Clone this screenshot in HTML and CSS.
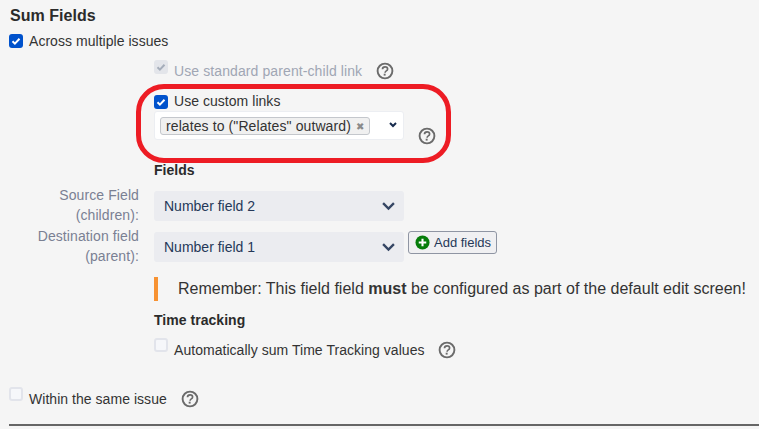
FILE: index.html
```html
<!DOCTYPE html>
<html lang="en">
<head>
    <meta charset="UTF-8">
    <title>Sum Fields</title>
    <link rel="stylesheet" href="styles.css">
</head>
<body>
    <svg width="0" height="0" class="defs">
        <symbol id="help" viewBox="0 0 18 18">
            <circle cx="9" cy="9" r="7.4" fill="none" stroke="#6b6b6b" stroke-width="1.9"/>
            <path d="M6.5 7.2c0-1.5 1.1-2.4 2.6-2.4s2.5.9 2.5 2.1c0 1-.5 1.5-1.3 2-.8.5-1.2.9-1.2 1.8" fill="none" stroke="#6b6b6b" stroke-width="1.7"/>
            <rect x="7.7" y="11.7" width="1.9" height="1.9" fill="#6b6b6b"/>
        </symbol>
        <symbol id="tick" viewBox="0 0 14 14">
            <path d="M3.5 7.2l2.4 2.4 4.6-4.8" fill="none" stroke="currentColor" stroke-width="2"/>
        </symbol>
        <symbol id="chevron" viewBox="0 0 18 12">
            <path d="M2.5 2.5L9 9l6.5-6.5" fill="none" stroke="#344563" stroke-width="2.8"/>
        </symbol>
        <symbol id="caret" viewBox="0 0 8 6">
            <path d="M1 1l3 3 3-3" fill="none" stroke="#172b4d" stroke-width="2"/>
        </symbol>
    </svg>

    <h3 class="title">Sum Fields</h3>

    <div class="check-row top-check">
        <span class="box on"><svg class="tick"><use href="#tick"/></svg></span>
        <span>Across multiple issues</span>
    </div>

    <div class="indent">
        <div class="check-row standard-link">
            <span class="box disabled"><svg class="tick"><use href="#tick"/></svg></span>
            <span class="muted">Use standard parent-child link</span>
            <svg class="help"><use href="#help"/></svg>
        </div>

        <div class="check-row custom-link">
            <span class="box on"><svg class="tick"><use href="#tick"/></svg></span>
            <span>Use custom links</span>
        </div>

        <div class="multi-row">
            <div class="multi-select">
                <span class="tag">relates to ("Relates" outward) <span class="tag-x">&#10006;</span></span>
                <svg class="mini-chevron"><use href="#caret"/></svg>
            </div>
            <svg class="help"><use href="#help"/></svg>
        </div>

        <h4 class="subhead fields-head">Fields</h4>
    </div>

    <div class="field-row">
        <label class="field-label">Source Field<br>(children):</label>
        <div class="select">Number field 2 <svg class="chevron"><use href="#chevron"/></svg></div>
    </div>
    <div class="field-row second">
        <label class="field-label">Destination field<br>(parent):</label>
        <div class="select">Number field 1 <svg class="chevron"><use href="#chevron"/></svg></div>
        <button class="add-btn" type="button">
            <svg class="plus" viewBox="0 0 16 16">
                <circle cx="8" cy="8" r="7.5" fill="#067d0a"/>
                <path d="M8 4v8M4 8h8" stroke="#fff" stroke-width="2.2"/>
            </svg>
            Add fields
        </button>
    </div>

    <div class="indent">
        <div class="notice">Remember: This field field <b>must</b> be configured as part of the default edit screen!</div>

        <h4 class="subhead time-head">Time tracking</h4>

        <div class="check-row time-check">
            <span class="box"></span>
            <span>Automatically sum Time Tracking values</span>
            <svg class="help"><use href="#help"/></svg>
        </div>
    </div>

    <div class="check-row same-issue">
        <span class="box"></span>
        <span>Within the same issue</span>
        <svg class="help"><use href="#help"/></svg>
    </div>

    <hr class="rule">

    <div class="highlight"></div>
</body>
</html>
```

FILE: styles.css
```css
html, body {
    height: 100%;
}

body {
    margin: 0;
    padding: 0 0 0 9px;
    background: #f5f5f5;
    color: #333;
    font-family: "Liberation Sans", Arial, sans-serif;
    font-size: 14px;
    line-height: 20px;
    letter-spacing: 0.04px;
    overflow: hidden;
    position: relative;
    box-sizing: border-box;
}

.defs {
    position: absolute;
}

.title {
    margin: 0 0 0 1px;
    padding-top: 6px;
    font-size: 16px;
    line-height: 20px;
    color: #2b2b2b;
}

.check-row {
    display: flex;
    align-items: flex-start;
    height: 20px;
}

.box {
    width: 14px;
    height: 14px;
    flex: none;
    margin-right: 6px;
    border-radius: 3px;
    background: #f6f7fa;
    border: 2px solid #e2e4eb;
    box-sizing: border-box;
    display: block;
}

.box.on {
    background: #0052cc;
    border: 0;
    color: #fff;
}

.box.disabled {
    background: #e3e5ea;
    border: 0;
    color: #a5adba;
}

.tick {
    display: block;
    width: 14px;
    height: 14px;
}

.muted {
    color: #a0a6b4;
    letter-spacing: 0.1px;
}

.help {
    width: 18px;
    height: 18px;
    flex: none;
}

.top-check {
    margin-top: 5px;
}

.top-check .box {
    margin-top: 3px;
}

.indent {
    margin-left: 145px;
}

.standard-link {
    margin-top: 10px;
}

.standard-link .box {
    margin-top: -1px;
}

.standard-link .help {
    margin-left: 14px;
    margin-top: 1px;
}

.custom-link {
    margin-top: 10px;
}

.custom-link .box {
    margin-top: 4px;
}

.multi-row {
    display: flex;
    align-items: flex-end;
}

.multi-select {
    width: 250px;
    height: 29px;
    box-sizing: border-box;
    background: #fff;
    border: 1px solid #eceef2;
    border-radius: 3px;
    padding: 5px;
    display: flex;
    justify-content: space-between;
}

.tag {
    height: 18px;
    line-height: 16px;
    box-sizing: border-box;
    padding: 0 5px;
    background: #f0f0f0;
    border: 1px solid #c4c7cc;
    border-radius: 3px;
    white-space: nowrap;
    letter-spacing: 0.1px;
}

.tag-x {
    color: #8a8a8a;
    font-size: 10px;
    vertical-align: 1px;
    margin-left: 1px;
}

.mini-chevron {
    width: 8px;
    height: 6px;
    margin: 5px 1px 0 0;
}

.multi-row .help {
    margin-left: 14px;
    margin-bottom: -5px;
}

.subhead {
    margin: 0;
    font-size: 14px;
    line-height: 18px;
    color: #2b2b2b;
}

.fields-head {
    margin-top: 21px;
}

.field-row {
    display: flex;
    align-items: flex-start;
    margin-top: 12px;
}

.field-row.second {
    margin-top: 7px;
}

.field-label {
    width: 130px;
    margin-right: 15px;
    text-align: right;
    color: #7a8093;
    margin-top: -6px;
    letter-spacing: 0.1px;
}

.select {
    width: 250px;
    height: 30px;
    line-height: 30px;
    box-sizing: border-box;
    padding: 0 8px 0 10px;
    background: #ebecf0;
    border-radius: 3px;
    color: #253858;
    letter-spacing: 0;
    display: flex;
    justify-content: space-between;
    align-items: center;
}

.chevron {
    width: 15px;
    height: 10px;
}

.add-btn {
    height: 23px;
    margin: -1px 0 0 4px;
    padding: 0 5px 0 6px;
    display: flex;
    align-items: center;
    gap: 4px;
    background: #f0f0f2;
    border: 1px solid #8f95a3;
    border-radius: 3px;
    color: #253858;
    font: 13px "Liberation Sans", Arial, sans-serif;
}

.plus {
    width: 15px;
    height: 15px;
}

.notice {
    margin-top: 11px;
    height: 24px;
    line-height: 24px;
    border-left: 4px solid #f79232;
    padding-left: 20px;
    font-size: 16px;
    letter-spacing: 0.01px;
    color: #333;
    white-space: nowrap;
}

.time-head {
    margin-top: 10px;
}

.time-check {
    margin-top: 11px;
}

.time-check .box {
    margin-top: -2px;
}

.time-check .help {
    margin-left: 13px;
    margin-top: 1px;
}

.same-issue {
    margin-top: 29px;
}

.same-issue .box {
    margin-top: -2px;
}

.same-issue .help {
    margin-left: 14px;
    margin-top: 1px;
}

.rule {
    margin: 15px 0 0;
    border: 0;
    border-top: 2px solid #666;
}

/* hand drawn red annotation on top of the form */
.highlight {
    position: absolute;
    left: 136px;
    top: 84px;
    width: 315px;
    height: 79px;
    box-sizing: border-box;
    border: 5px solid #ed1c24;
    border-radius: 28px;
}
```
